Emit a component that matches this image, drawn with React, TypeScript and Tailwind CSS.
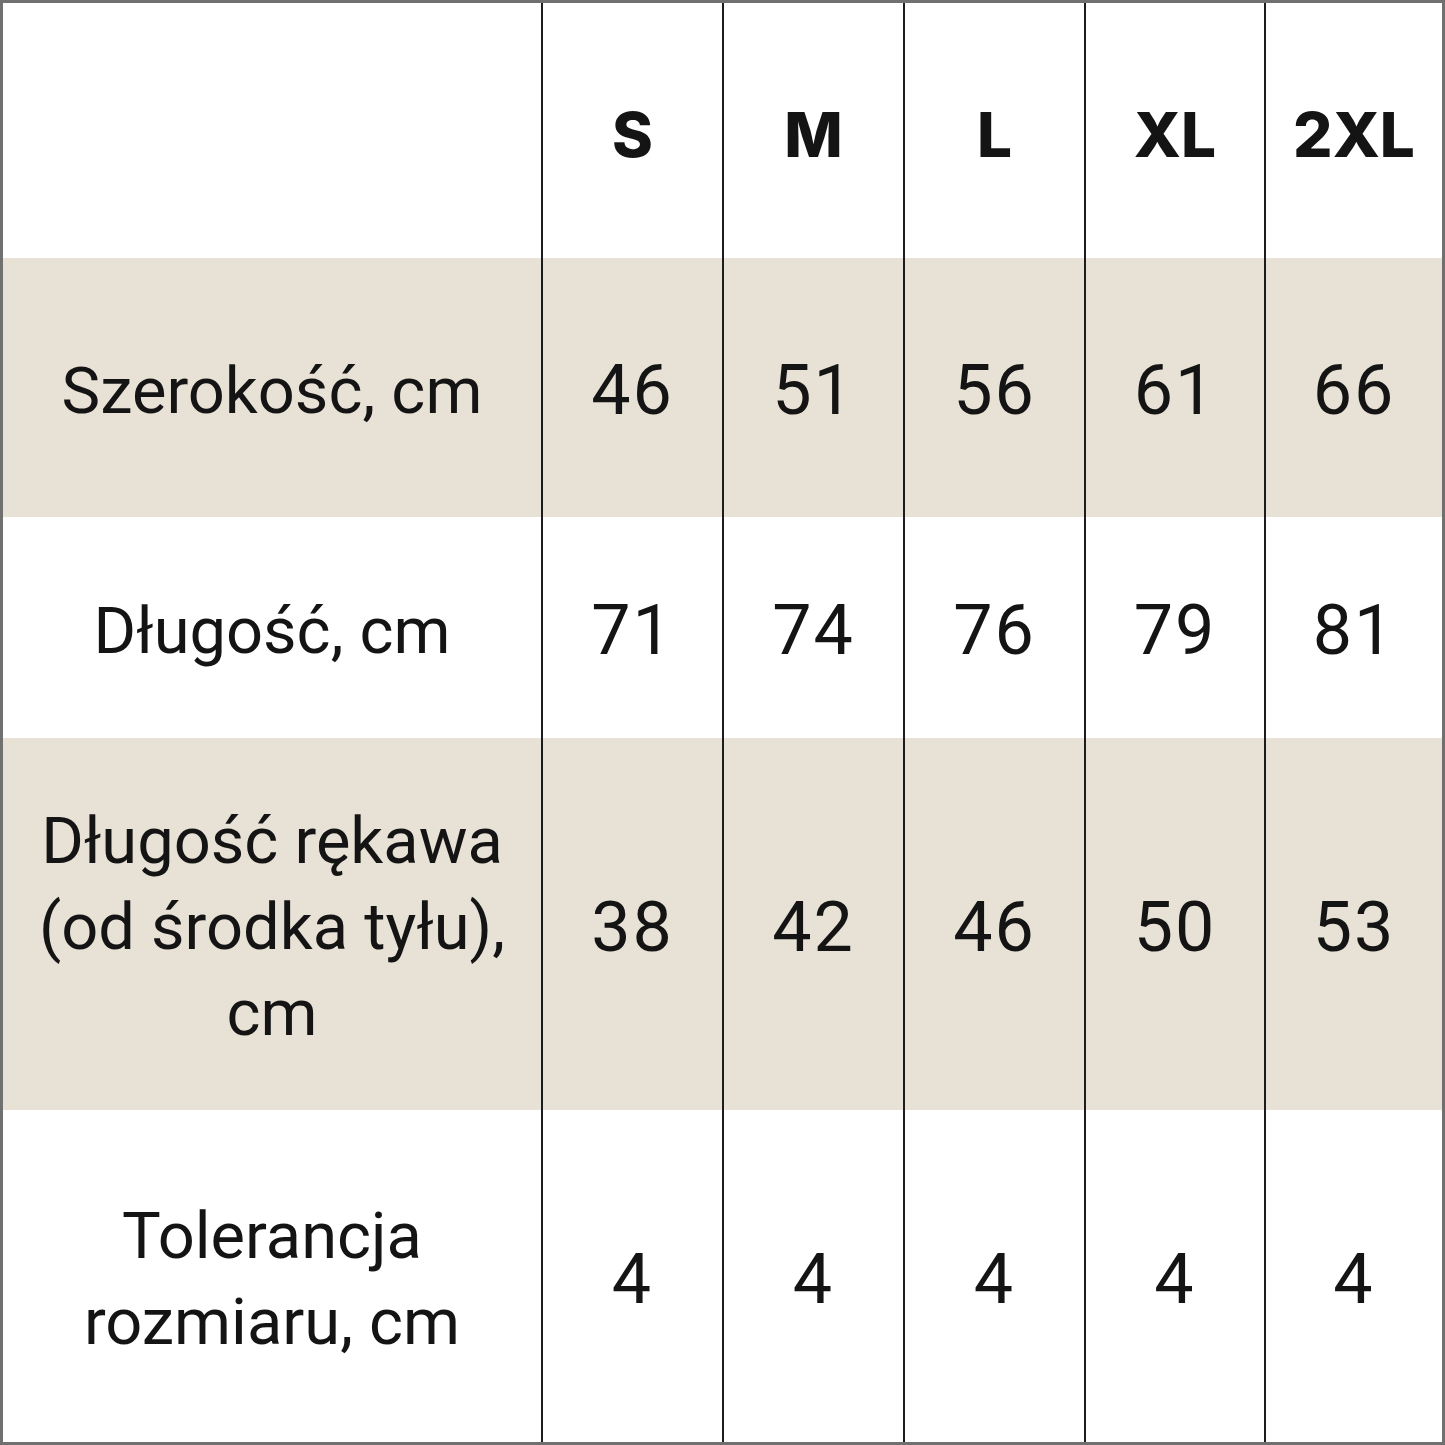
const SIZES = ["S", "M", "L", "XL", "2XL"];

interface Row {
  label: string[];
  values: string[];
  shaded: boolean;
}

const ROWS: Row[] = [
  { label: ["Szerokość, cm"], values: ["46", "51", "56", "61", "66"], shaded: true },
  { label: ["Długość, cm"], values: ["71", "74", "76", "79", "81"], shaded: false },
  {
    label: ["Długość rękawa", "(od środka tyłu),", "cm"],
    values: ["38", "42", "46", "50", "53"],
    shaded: true,
  },
  { label: ["Tolerancja", "rozmiaru, cm"], values: ["4", "4", "4", "4", "4"], shaded: false },
];

export default function App() {
  return (
    <div className="h-[1445px] w-[1445px] border-[3px] border-[#707070] bg-white text-[#141414] [font-family:Roboto,'Noto_Sans',sans-serif]">
      <div className="grid h-full w-full grid-cols-[538px_181px_181px_181px_180px_178px] grid-rows-[255px_259px_221px_372px_332px]">
        {/* header */}
        <div />
        {SIZES.map((s) => (
          <div
            key={s}
            className="flex items-center justify-center border-l-2 border-[#1c1c1c] pt-[8px] text-[62px] font-extrabold [font-family:Inter,sans-serif]"
          >
            {s}
          </div>
        ))}

        {ROWS.map((row) => (
          <div key={row.label.join(" ")} className="contents">
            <div
              className={`flex flex-col items-center justify-center pt-[6px] text-center text-[65px] leading-[86px] ${
                row.shaded ? "bg-[#e8e2d6]" : "bg-white"
              }`}
            >
              {row.label.map((line) => (
                <span key={line}>{line}</span>
              ))}
            </div>
            {row.values.map((v, i) => (
              <div
                key={i}
                className={`flex items-center justify-center border-l-2 border-[#1c1c1c] pt-[6px] text-[70px] tracking-[2px] ${
                  row.shaded ? "bg-[#e8e2d6]" : "bg-white"
                }`}
              >
                {v}
              </div>
            ))}
          </div>
        ))}
      </div>
    </div>
  );
}
